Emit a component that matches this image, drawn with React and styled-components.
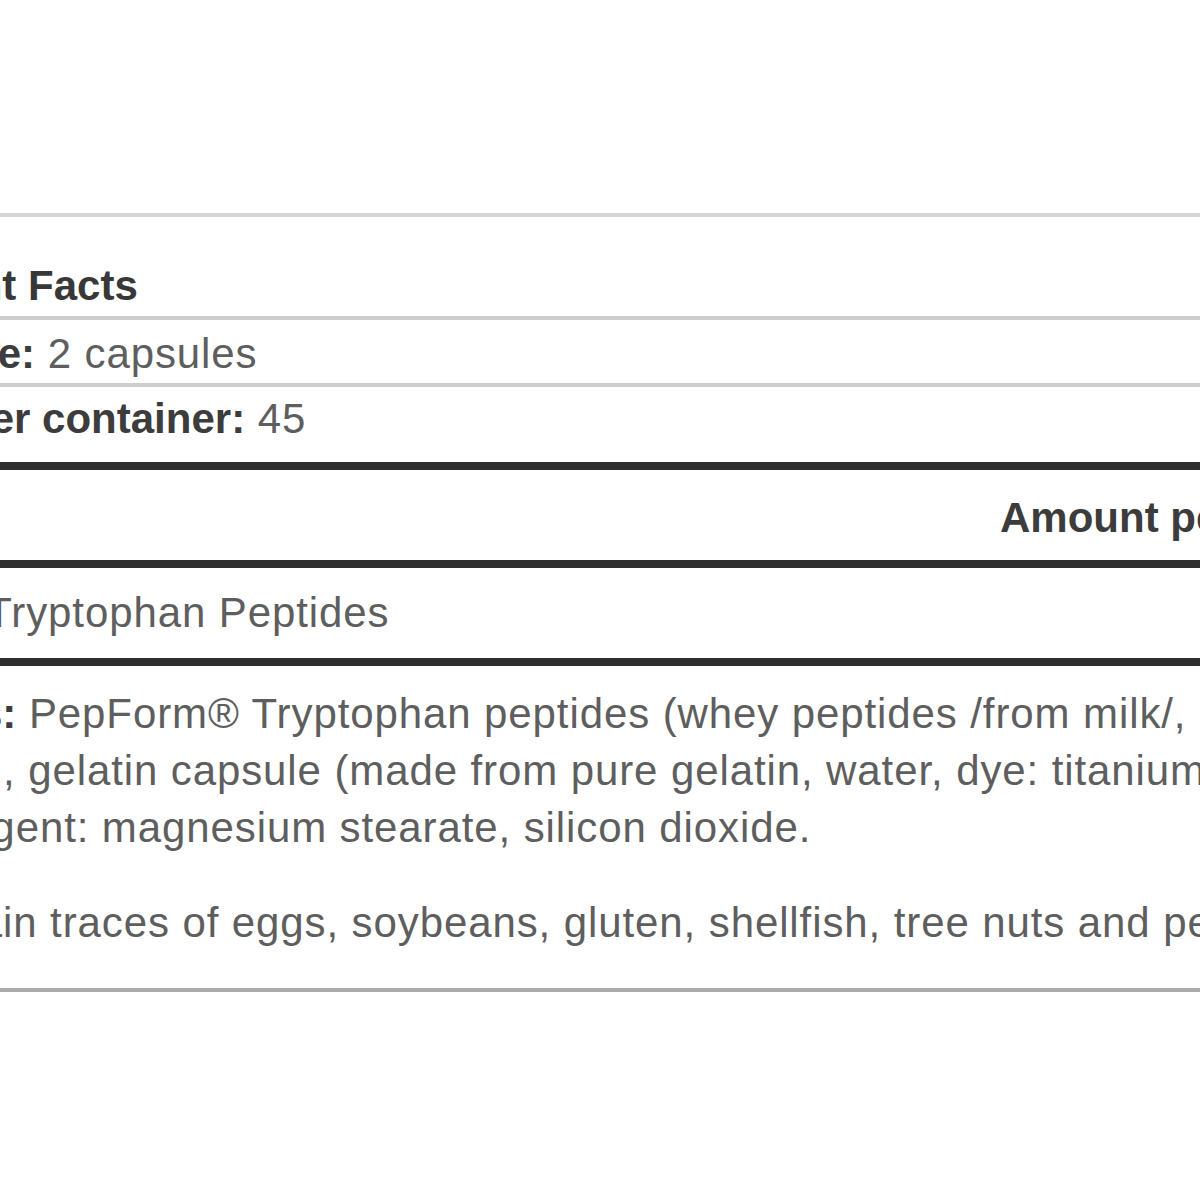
import styled, { createGlobalStyle } from "styled-components";

const GlobalStyle = createGlobalStyle`
  html, body {
    margin: 0;
    padding: 0;
    background: #ffffff;
  }
  body {
    font-family: "Liberation Sans", Arial, sans-serif;
  }
`;

// the label is bigger than the window, so it gets clipped on both sides
const Viewport = styled.div`
  width: 1200px;
  height: 1200px;
  overflow: hidden;
  padding-top: 213px;
  box-sizing: border-box;
  background: #fff;
`;

const FactsTable = styled.table`
  margin-left: -232px;
  width: 2000px;
  table-layout: fixed;
  border-collapse: collapse;
  border-top: 4px solid #d6d6d6;
  border-bottom: 4px solid #ababab;
  font-size: 42px;
  line-height: 57px;
  letter-spacing: 0.9px;
  color: #5e5e5e;
`;

const borders = {
  thin: "4px solid #cdcdcd",
  thick: "8px solid #2f2f2f",
  none: "0",
};

const Cell = styled.td`
  padding: ${(p) => p.$pt || 0}px 8px ${(p) => p.$pb || 0}px 8px;
  border-bottom: ${(p) => borders[p.$line || "none"]};
  text-align: ${(p) => p.$align || "left"};
  vertical-align: top;
  white-space: nowrap;
`;

const HeadCell = styled(Cell).attrs({ as: "th" })`
  font-weight: 700;
  letter-spacing: 0;
  color: #3c3c3c;
`;

const Title = styled.span`
  font-weight: 700;
  letter-spacing: 0;
  color: #383838;
`;

const Label = styled.b`
  font-weight: 700;
  letter-spacing: 0;
  color: #3c3c3c;
`;

const Reg = styled.sup`
  font-size: 0.6em;
  line-height: 0;
  vertical-align: 0.5em;
`;

const Para = styled.p`
  margin: 0;
  & + & {
    margin-top: 38px;
  }
`;

function App() {
  return (
    <>
      <GlobalStyle />
      <Viewport>
        <FactsTable>
          <colgroup>
            <col style={{ width: 1224 }} />
            <col style={{ width: 560 }} />
            <col />
          </colgroup>
          <tbody>
            <tr>
              <Cell colSpan={3} $pt={40} $pb={2} $line="thin">
                <Title>Supplement Facts</Title>
              </Cell>
            </tr>
            <tr>
              <Cell colSpan={3} $pt={5} $pb={1} $line="thin">
                <Label>Serving size:</Label> 2 capsules
              </Cell>
            </tr>
            <tr>
              <Cell colSpan={3} $pt={3} $pb={15} $line="thick">
                <Label>Servings per container:</Label> 45
              </Cell>
            </tr>
            <tr>
              <HeadCell $pt={19} $pb={14} $line="thick"></HeadCell>
              <HeadCell $pt={19} $pb={14} $line="thick">
                Amount per serving
              </HeadCell>
              <HeadCell $pt={19} $pb={14} $line="thick">
                % DV
              </HeadCell>
            </tr>
            <tr>
              <Cell $pt={16} $pb={17} $line="thick">
                PepForm<Reg>®</Reg> Tryptophan Peptides
              </Cell>
              <Cell $pt={16} $pb={17} $line="thick" $align="right">
                500 mg
              </Cell>
              <Cell $pt={16} $pb={17} $line="thick">
                **
              </Cell>
            </tr>
            <tr>
              <Cell colSpan={3} $pt={19} $pb={37}>
                <Para>
                  <Label>Ingredients:</Label> PepForm® Tryptophan peptides
                  (whey peptides /from milk/, enzymatically
                  <br />
                  hydrolysed), gelatin capsule (made from pure gelatin, water,
                  dye: titanium dioxide),
                  <br />
                  releasing agent: magnesium stearate, silicon dioxide.
                </Para>
                <Para>
                  Might contain traces of eggs, soybeans, gluten, shellfish,
                  tree nuts and peanuts.
                </Para>
              </Cell>
            </tr>
          </tbody>
        </FactsTable>
      </Viewport>
    </>
  );
}

export default App;
